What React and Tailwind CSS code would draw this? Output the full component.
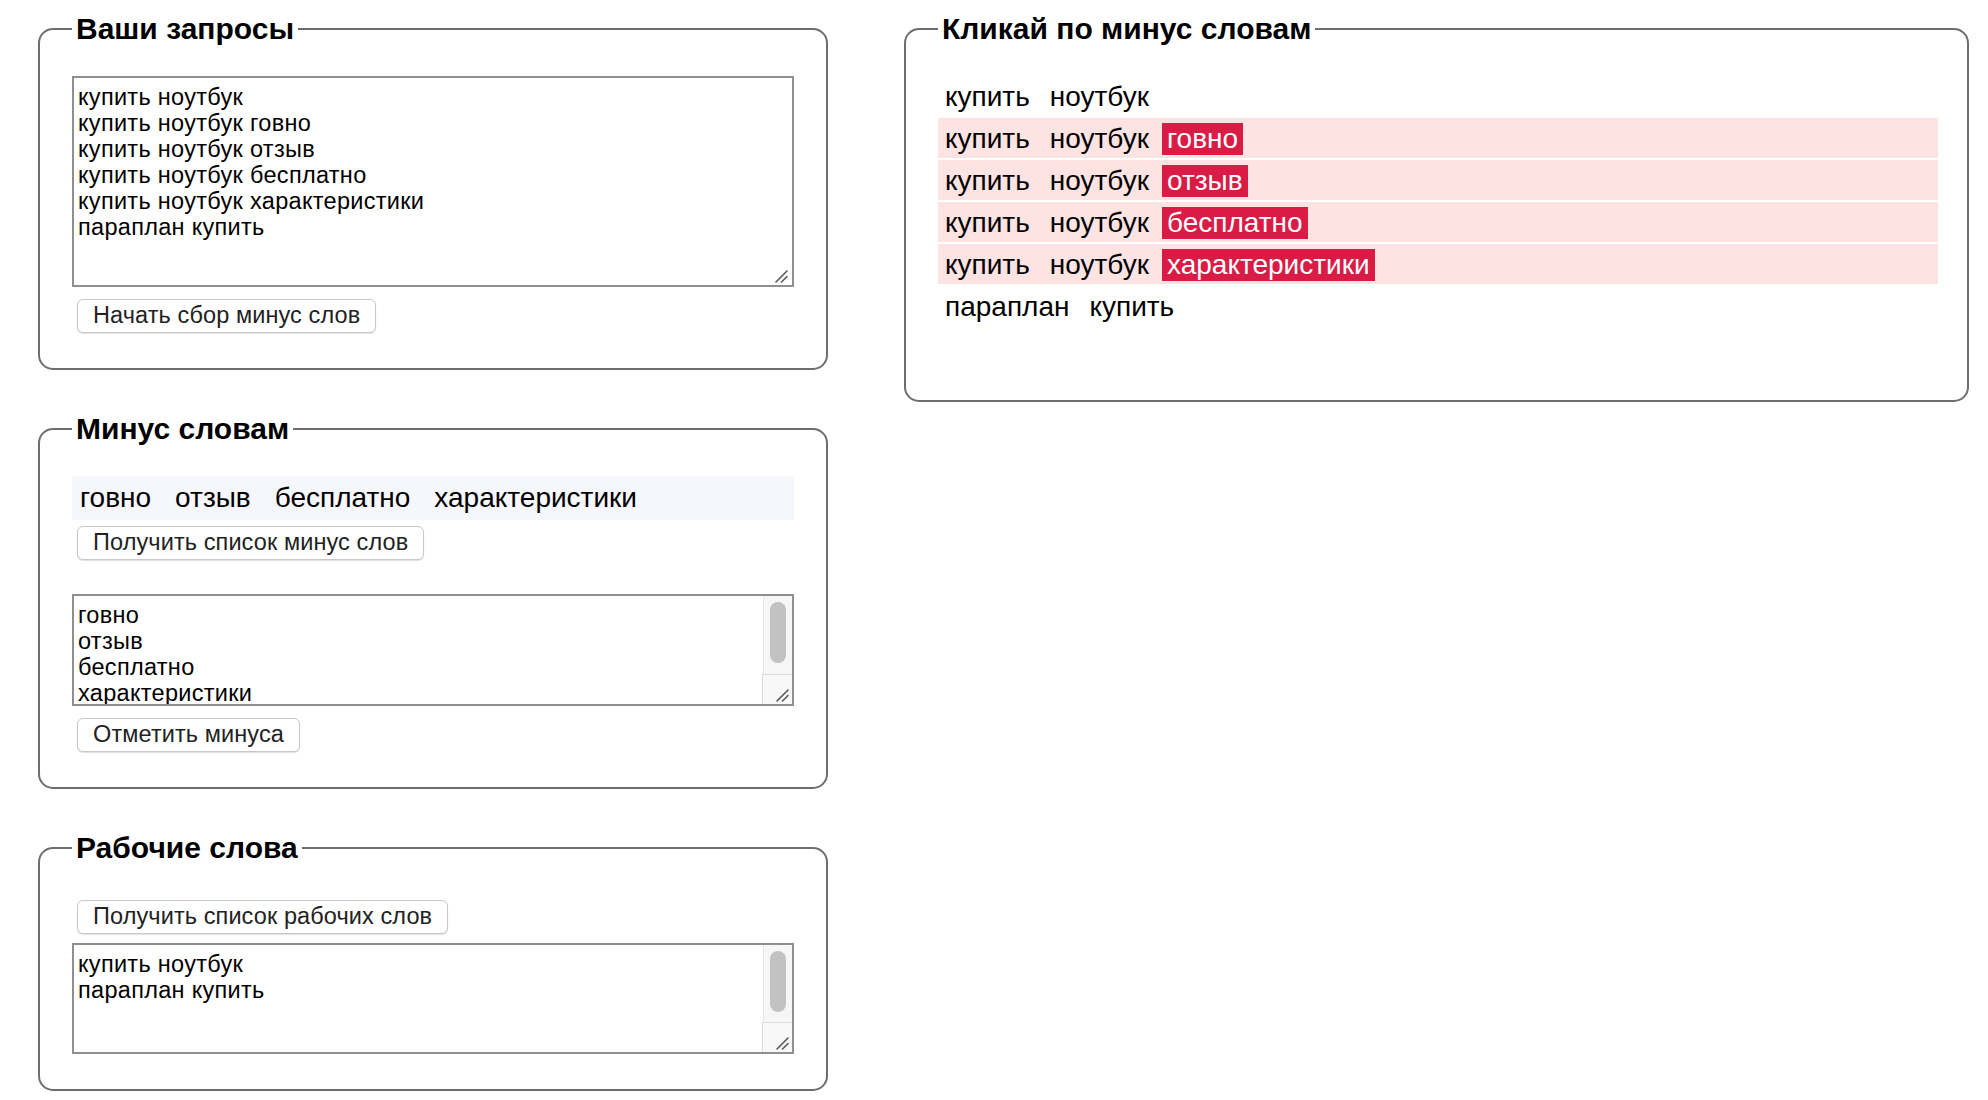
import React from "react";

const FONT = "font-['Liberation_Sans',Arial,Helvetica,sans-serif]";

function Grip() {
  return (
    <svg width="14" height="14" viewBox="0 0 14 14">
      <path d="M2 13 L13 2 M7.5 13 L13 7.5" stroke="#5a5a5a" strokeWidth="1.6" strokeLinecap="round" fill="none" />
    </svg>
  );
}

function TextBox({ lines, h, scroll, className = "" }) {
  return (
    <div className={`relative border-2 border-[#8f8f8f] bg-white overflow-hidden ${h} ${className}`}>
      <div className="px-[4px] pt-[6px] text-[23.5px] tracking-[0.3px] leading-[26px] text-black">
        {lines.map((l, i) => (
          <div key={i} className="whitespace-pre">{l}</div>
        ))}
      </div>
      {scroll ? (
        <div className="absolute right-0 top-0 bottom-0 w-[29px] bg-[#f6f6f6] border-l border-[#e6e6e6] flex flex-col">
          <div className="flex-1 flex justify-center pt-[6px]">
            <div className="w-[16px] h-[61px] rounded-full bg-[#c2c2c2]" />
          </div>
          <div className="relative h-[30px] border-t border-l border-[#dcdcdc] bg-[#f8f8f8] -ml-[2px]">
            <div className="absolute right-[3px] bottom-[2px]">
              <Grip />
            </div>
          </div>
        </div>
      ) : (
        <div className="absolute right-[4px] bottom-[2px]">
          <Grip />
        </div>
      )}
    </div>
  );
}

function Btn({ children, className = "" }) {
  return (
    <button
      className={`self-start ml-[5px] h-[34px] px-[15px] bg-white border border-[#c8c8c8] rounded-[6px] text-[23.5px] tracking-[0.1px] leading-none text-[#222] shadow-[0_1px_1px_rgba(0,0,0,0.12)] ${className}`}
    >
      {children}
    </button>
  );
}

function Panel({ title, className = "", children }) {
  return (
    <fieldset className={`m-0 min-w-0 border-2 border-[#6e6e6e] rounded-[15px] ${className}`}>
      <legend className="px-[4px] text-[30px] leading-[34px] font-bold text-black">{title}</legend>
      {children}
    </fieldset>
  );
}

const queries = [
  "купить ноутбук",
  "купить ноутбук говно",
  "купить ноутбук отзыв",
  "купить ноутбук бесплатно",
  "купить ноутбук характеристики",
  "параплан купить",
];
const minus = ["говно", "отзыв", "бесплатно", "характеристики"];

export default function App() {
  return (
    <div className={`${FONT} bg-white min-h-[1100px] flex items-start gap-[76px] pl-[38px] pt-[12px]`}>
      <div className="w-[790px] flex flex-col gap-[42px]">
        <Panel title="Ваши запросы" className="px-[32px] pt-[30px] pb-[35px]">
          <div className="flex flex-col">
            <TextBox lines={queries} h="h-[211px]" />
            <Btn className="mt-[12px]">Начать сбор минус слов</Btn>
          </div>
        </Panel>

        <Panel title="Минус словам" className="px-[32px] pt-[30px] pb-[35px]">
          <div className="flex flex-col">
            <div className="h-[44px] bg-[#f6f7fc] flex items-center gap-[24px] pl-[8px] text-[28px] text-black">
              {minus.map((w) => (
                <span key={w}>{w}</span>
              ))}
            </div>
            <Btn className="mt-[6px]">Получить список минус слов</Btn>
            <TextBox lines={minus} h="h-[112px]" scroll className="mt-[34px]" />
            <Btn className="mt-[12px]">Отметить минуса</Btn>
          </div>
        </Panel>

        <Panel title="Рабочие слова" className="px-[32px] pt-[35px] pb-[35px]">
          <div className="flex flex-col">
            <Btn>Получить список рабочих слов</Btn>
            <TextBox lines={["купить ноутбук", "параплан купить"]} h="h-[111px]" scroll className="mt-[9px]" />
          </div>
        </Panel>
      </div>

      <Panel title="Кликай по минус словам" className="w-[1065px] pl-[32px] pr-[29px] pt-[30px] pb-[74px]">
        <div className="flex flex-col gap-[2px]">
          {queries.map((q) => {
            const words = q.split(" ");
            const bad = words.some((w) => minus.includes(w));
            return (
              <div
                key={q}
                className={`h-[40px] flex items-center gap-[10px] pl-[2px] pt-[1px] text-[28px] leading-[32px] text-black ${bad ? "bg-[#fde3e1]" : ""}`}
              >
                {words.map((w, i) => (
                  <span
                    key={i}
                    className={`px-[5px] ${minus.includes(w) ? "bg-[#d91b45] text-white -ml-[2px]" : ""}`}
                  >
                    {w}
                  </span>
                ))}
              </div>
            );
          })}
        </div>
      </Panel>
    </div>
  );
}
